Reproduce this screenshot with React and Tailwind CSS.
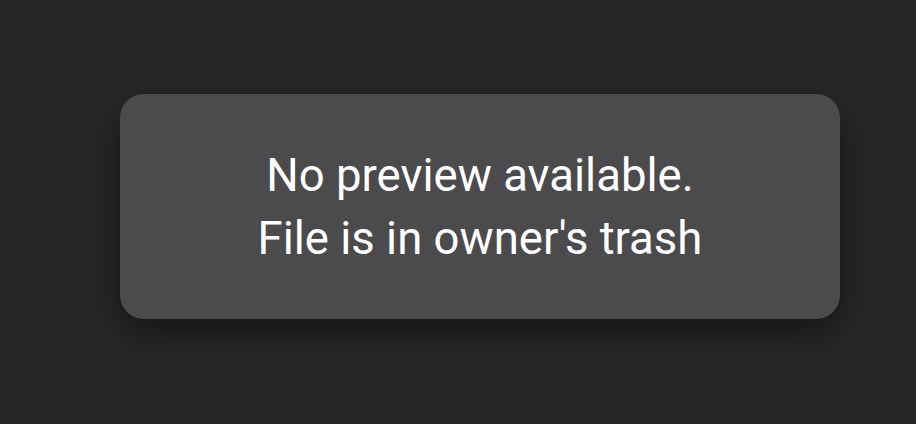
export default function App() {
  return (
    <div className="w-[916px] h-[424px] bg-[#272727] pl-[120px] pt-[94px] overflow-hidden">
      <div
        className="w-[720px] h-[225px] rounded-[24px] bg-[#4b4a4c] shadow-[0_14px_36px_rgba(0,0,0,0.45)] flex flex-col items-center justify-center text-white text-[45.5px] leading-[63px]"
        style={{ fontFamily: "Roboto, 'Noto Sans', sans-serif" }}
      >
        <div>No preview available.</div>
        <div>File is in owner's trash</div>
      </div>
    </div>
  );
}
